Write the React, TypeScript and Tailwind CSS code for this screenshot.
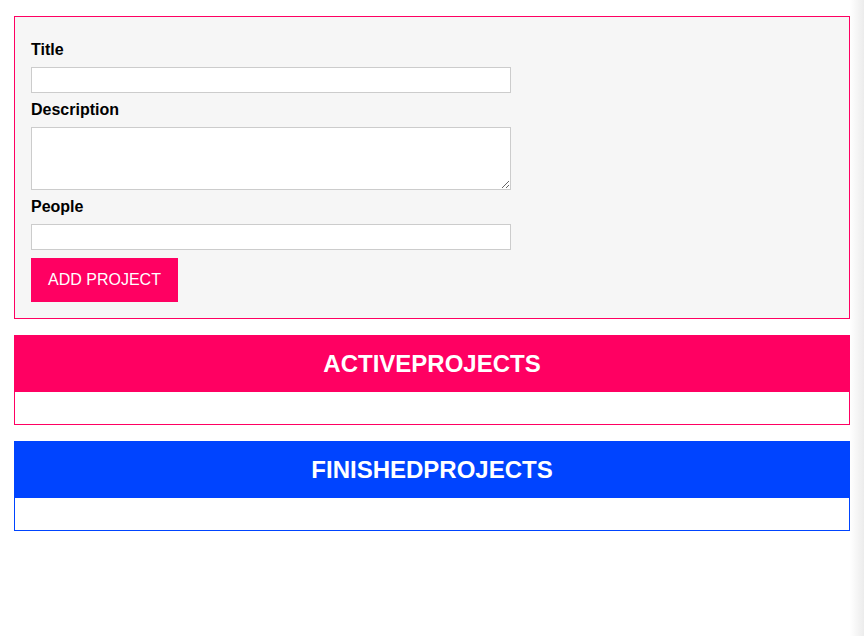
export default function App() {
  return (
    <div className="flex min-h-screen bg-white font-['Liberation_Sans',Arial,sans-serif] text-black">
      {/* Main column */}
      <div className="flex w-[850px] shrink-0 flex-col gap-4 pl-[14px] pt-4">
        {/* Project input form */}
        <form className="flex w-[836px] flex-col gap-2 border border-[#ff0062] bg-[#f6f6f6] p-4">
          <label className="mt-2 h-[18px] text-[16px] font-bold leading-[18px]">Title</label>
          <input type="text" className="h-[26px] w-[480px] border border-[#ccc] bg-white px-[6px] text-[16px]" />
          <label className="h-[18px] text-[16px] font-bold leading-[18px]">Description</label>
          <textarea rows={3} className="h-[63px] w-[480px] border border-[#ccc] bg-white px-[6px] text-[16px]" />
          <label className="h-[18px] text-[16px] font-bold leading-[18px]">People</label>
          <input type="number" className="h-[26px] w-[480px] border border-[#ccc] bg-white px-[6px] text-[16px]" />
          <div>
            <button
              type="button"
              className="h-[44px] border border-[#ff0062] bg-[#ff0062] px-4 text-[16px] leading-[18px] text-white"
            >
              ADD PROJECT
            </button>
          </div>
        </form>

        {/* Active projects */}
        <section className="w-[836px] border border-[#ff0062]">
          <header className="flex h-14 items-center justify-center bg-[#ff0062]">
            <h2 className="text-[24px] font-bold leading-[28px] text-white">ACTIVEPROJECTS</h2>
          </header>
          <ul className="h-8 bg-white" />
        </section>

        {/* Finished projects */}
        <section className="w-[836px] border border-[#0044ff]">
          <header className="flex h-14 items-center justify-center bg-[#0044ff]">
            <h2 className="text-[24px] font-bold leading-[28px] text-white">FINISHEDPROJECTS</h2>
          </header>
          <ul className="h-8 bg-white" />
        </section>
      </div>
      {/* faint edge shade on the right */}
      <div className="flex-1 bg-gradient-to-r from-white to-[#ececec]" />
    </div>
  );
}
